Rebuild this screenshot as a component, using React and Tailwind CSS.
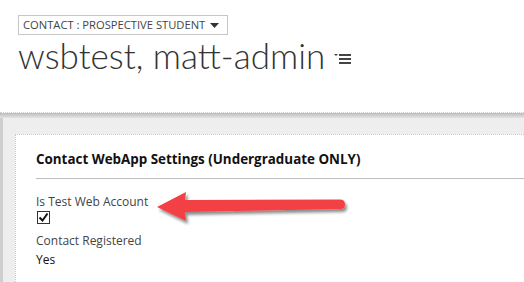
export default function App() {
  const seg = { fontFamily: '"Open Sans", "Noto Sans", sans-serif' };
  return (
    <div className="w-[524px] h-[282px] overflow-hidden bg-white relative" style={seg}>
      <div className="h-[112px] bg-white pl-[18px] pt-[11px]">
        <div className="inline-flex items-center h-[20px] border border-[#c6c6c6] pl-[4px] pr-[8px] text-[11.2px] text-[#444]">
          <span>CONTACT : PROSPECTIVE STUDENT</span>
          <svg width="9" height="5" viewBox="0 0 9 5" className="ml-[5px]"><path d="M0 0h9L4.5 5z" fill="#333" /></svg>
        </div>
        <div className="flex items-center">
          <span className="text-[35px] font-light text-[#333] leading-[40px]" style={{ fontFamily: 'Lato, "Open Sans", sans-serif' }}>wsbtest, matt-admin</span>
          <svg width="18" height="12" viewBox="0 0 18 12" className="ml-[9px] mt-[8px]">
            <path d="M0 1h4L2 3z" fill="#444" />
            <rect x="5" y="1" width="12" height="2" fill="#444" />
            <rect x="5" y="5" width="12" height="2" fill="#444" />
            <rect x="5" y="9" width="12" height="2" fill="#444" />
          </svg>
        </div>
      </div>
      <div className="h-[1px] border-t border-dotted border-[#cfcfcf]" />
      <div className="h-[5px] bg-gradient-to-b from-[#bcbcbc] to-[#e4e4e4]" />
      <div className="h-[164px] bg-[#eeeeee] border-l-[3px] border-[#cfcfcf] pl-[12px] pt-[16px]">
        <div className="h-full bg-white border-t border-l border-dotted border-[#c8c8c8] pl-[20px] pt-[15px]">
          <div className="text-[13.4px] font-bold text-[#111] leading-[18px]">Contact WebApp Settings (Undergraduate ONLY)</div>
          <div className="mt-[10px] border-t border-[#bdbdbd]" />
          <div className="mt-[15px] text-[12px] text-[#444] leading-[15px]">Is Test Web Account</div>
          <div className="mt-[2px] ml-[1px] w-[13px] h-[13px] border border-[#333] bg-white flex items-center justify-center">
            <svg width="11" height="11" viewBox="0 0 11 11"><path d="M1.5 5.5l3 3 5-7" stroke="#111" strokeWidth="2" fill="none" /></svg>
          </div>
          <div className="mt-[9px] text-[12px] text-[#444] leading-[15px]">Contact Registered</div>
          <div className="mt-[4px] text-[12px] text-[#111] leading-[15px]">Yes</div>
        </div>
      </div>
      <svg className="absolute left-0 top-0" width="524" height="282" viewBox="0 0 524 282">
        <defs>
          <filter id="sh" x="-10%" y="-50%" width="130%" height="200%">
            <feDropShadow dx="2" dy="3" stdDeviation="1.6" floodColor="#000" floodOpacity="0.45" />
          </filter>
        </defs>
        <path d="M157 207 L186 192 L185 200 L340 199.5 Q345 199.5 345 204.5 Q345 209 340 209 L185 212 L186 221 Z" fill="#f23f44" filter="url(#sh)" />
      </svg>
    </div>
  );
}
